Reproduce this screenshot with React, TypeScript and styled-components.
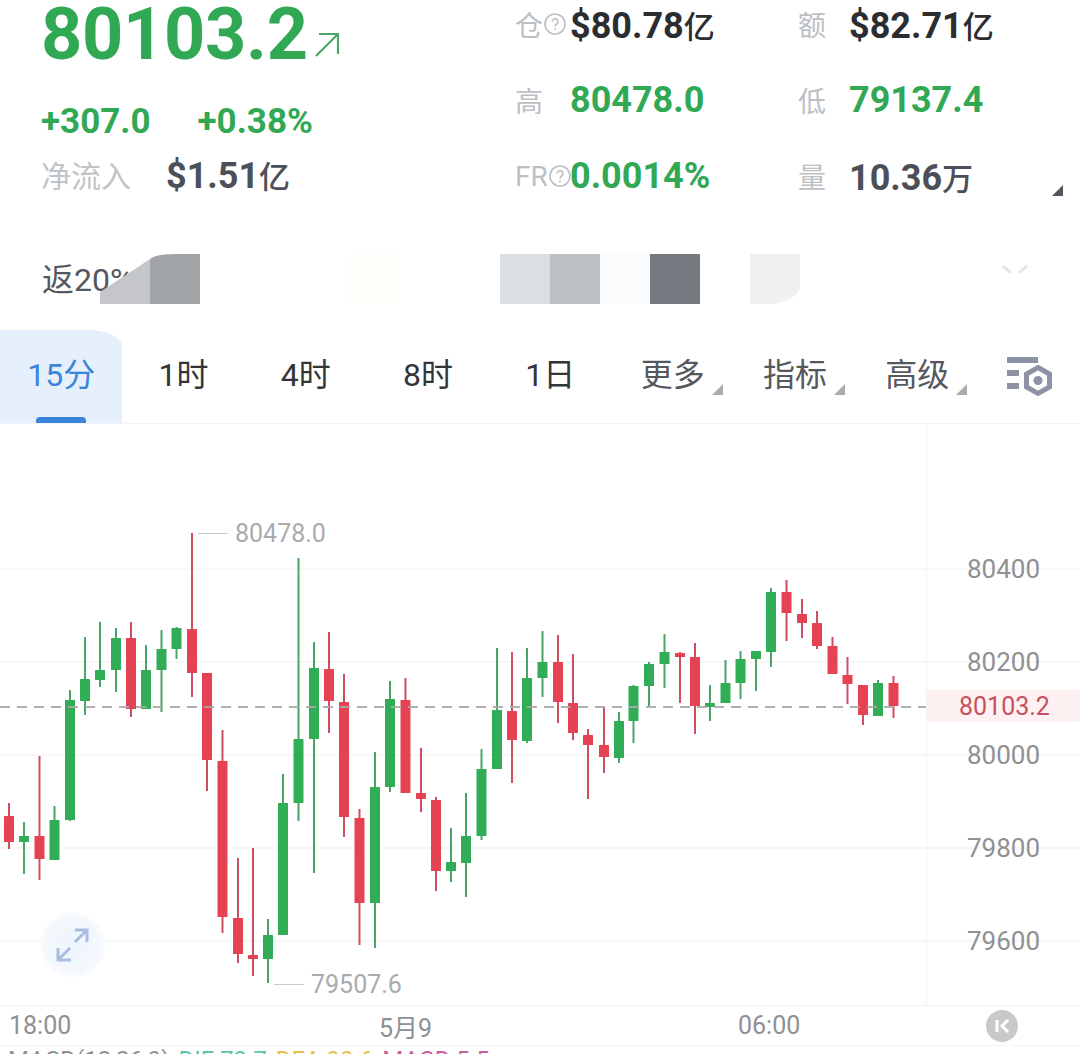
import React from "react";
import styled, { createGlobalStyle } from "styled-components";

const Global = createGlobalStyle`
  html, body { margin: 0; padding: 0; background: #fff; }
  body { font-family: Roboto, "Noto Sans CJK SC", sans-serif; }
`;

const cjk = `Roboto, "Noto Sans CJK SC", sans-serif`;
const GREEN = "#31a854";

const Page = styled.div`
  position: relative;
  width: 1080px;
  height: 1054px;
  overflow: hidden;
  background: #fff;
  font-family: ${cjk};
`;

const Header = styled.header`
  position: relative;
  display: flex;
  height: 270px;
  margin-top: -16px;
  box-sizing: border-box;
`;

const Summary = styled.section`
  width: 515px;
  padding-left: 41px;
  box-sizing: border-box;
  display: flex;
  flex-direction: column;
`;

const PriceRow = styled.div`
  display: flex;
  align-items: flex-end;
  height: 93px;
`;

const Price = styled.span`
  font-size: 72px;
  line-height: 84px;
  font-weight: 700;
  color: ${GREEN};
  letter-spacing: -0.3px;
`;

const TrendIcon = styled.svg`
  width: 25px;
  height: 25px;
  margin: 0 0 20px 6px;
  flex: none;
`;

const DeltaRow = styled.div`
  display: flex;
  gap: 47px;
  margin-top: 24px;
  height: 40px;
  align-items: center;
  font-size: 35px;
  font-weight: 700;
  color: ${GREEN};
`;

const FlowRow = styled.div`
  display: flex;
  align-items: center;
  height: 40px;
  margin-top: 13px;
`;

const FlowLabel = styled.span`
  width: 125px;
  font-size: 30px;
  color: #c0c4c8;
`;

const FlowValue = styled.span`
  font-size: 36px;
  font-weight: 700;
  color: #4c4f57;
  & > small {
    font-size: 31px;
    font-weight: 500;
  }
`;

const Stats = styled.section`
  display: grid;
  grid-template-columns: 55px 228px 51px 1fr;
  grid-auto-rows: 76px;
  align-items: center;
  margin-top: 2px;
`;

const StatLabel = styled.span`
  display: flex;
  align-items: center;
  white-space: nowrap;
  font-size: 28px;
  color: #bcc0c4;
`;

const StatValue = styled.span<{ $tone: "dark" | "green" | "slate" }>`
  font-size: 36px;
  font-weight: 700;
  white-space: nowrap;
  color: ${(p) => (p.$tone === "green" ? GREEN : p.$tone === "slate" ? "#4c4f57" : "#2b2d31")};
  & > small {
    font-size: 31px;
    font-weight: 500;
  }
`;

const HelpIcon = styled.svg`
  width: 24px;
  height: 24px;
  flex: none;
`;

const CornerMark = styled.i`
  position: absolute;
  right: 17px;
  bottom: 58px;
  width: 0;
  height: 0;
  border-left: 11px solid transparent;
  border-bottom: 11px solid #52565e;
`;

const PromoBar = styled.div`
  position: relative;
  height: 76px;
  padding-left: 42px;
  box-sizing: border-box;
  display: flex;
  align-items: flex-start;
  font-size: 32px;
  line-height: 52px;
  color: #55585e;
`;

const Mosaic = styled.div`
  position: absolute;
  left: 100px;
  top: 0;
  display: flex;
  & > span:first-child {
    clip-path: polygon(0 38px, 38px 13px, 50px 5px, 50px 50px, 0 50px);
  }
  & > span:nth-child(2) {
    border-top-left-radius: 24px 6px;
  }
  & > span:last-child {
    border-bottom-right-radius: 34px 18px;
  }
`;

const Tile = styled.span<{ $color: string }>`
  width: 50px;
  height: 50px;
  background: ${(p) => p.$color};
`;

const Chevron = styled.svg`
  position: absolute;
  left: 1000px;
  top: 10px;
  width: 30px;
  height: 14px;
`;

const Toolbar = styled.nav`
  display: flex;
  height: 93px;
  border-bottom: 1px solid #f3f4f5;
  box-sizing: content-box;
`;

const Tab = styled.div<{ $active?: boolean; $muted?: boolean }>`
  position: relative;
  width: 122.3px;
  flex: none;
  display: flex;
  align-items: center;
  justify-content: center;
  font-size: 32px;
  padding-bottom: 9px;
  box-sizing: border-box;
  color: ${(p) => (p.$active ? "#3a85d8" : p.$muted ? "#55585e" : "#333538")};
  background: ${(p) => (p.$active ? "#e6f0fc" : "transparent")};
  border-top-right-radius: ${(p) => (p.$active ? "34px 16px" : "0")};
`;

const TabBar = styled.i`
  position: absolute;
  left: 36px;
  bottom: 0;
  width: 50px;
  height: 6px;
  border-radius: 4px 4px 0 0;
  background: #3a85d8;
`;

const TabCaret = styled.i`
  position: absolute;
  right: 11px;
  bottom: 28px;
  width: 0;
  height: 0;
  border-left: 11px solid transparent;
  border-bottom: 11px solid #a9abae;
`;

const SettingsIcon = styled.svg`
  width: 48px;
  height: 42px;
  margin: 25px 0 0 27px;
  flex: none;
`;

const Chart = styled.section`
  position: relative;
  height: 582px;
  box-sizing: border-box;
  display: flex;
  justify-content: flex-end;
  border-bottom: 1px solid #f1f2f3;
`;

const ChartCanvas = styled.svg`
  position: absolute;
  left: 0;
  top: 0;
  width: 1080px;
  height: 581px;
`;

const PriceAxis = styled.div`
  position: relative;
  width: 154px;
  box-sizing: border-box;
  border-left: 1px solid #f1f2f3;
  padding-top: 98.5px;
  display: flex;
  flex-direction: column;
  align-items: flex-start;
`;

const AxisLabel = styled.span`
  height: 93px;
  flex: none;
  display: flex;
  align-items: center;
  padding-left: 40px;
  font-size: 26px;
  color: #8e9094;
`;

const LastPrice = styled.div`
  position: absolute;
  left: 0;
  right: 0;
  top: 266px;
  height: 32px;
  display: flex;
  align-items: center;
  padding-left: 32px;
  background: #fdf1f2;
  font-size: 25px;
  color: #c8505f;
`;

const Extreme = styled.div<{ $x: number; $y: number }>`
  position: absolute;
  left: ${(p) => p.$x}px;
  top: ${(p) => p.$y}px;
  display: flex;
  align-items: center;
  gap: 7px;
  height: 30px;
  font-size: 25px;
  color: #a9abae;
  &::before {
    content: "";
    width: 30px;
    height: 1px;
    background: #c9cacc;
  }
`;

const ExpandButton = styled.div`
  position: absolute;
  left: 41px;
  top: 489px;
  width: 64px;
  height: 64px;
  border-radius: 50%;
  background: radial-gradient(circle, #eff5fd 0%, #f2f7fd 50%, #fafcff 80%, #ffffff 100%);
  display: flex;
  align-items: center;
  justify-content: center;
`;

const ExpandIcon = styled.svg`
  width: 36px;
  height: 36px;
`;

const TimeAxis = styled.div`
  position: relative;
  height: 39px;
  display: grid;
  grid-template-columns: 370px 359px 248px 1fr;
  align-items: center;
  padding-left: 9px;
  font-size: 25px;
  color: #8e9094;
  border-bottom: 1px solid #f1f2f3;
`;

const JumpButton = styled.svg`
  width: 32px;
  height: 32px;
`;

const IndicatorRow = styled.div`
  display: flex;
  gap: 9px;
  padding-left: 8px;
  margin-top: 1px;
  font-size: 24px;
  line-height: 26px;
  white-space: nowrap;
`;

const Indicator = styled.span<{ $color: string }>`
  color: ${(p) => p.$color};
`;

type Candle = [number, "g" | "r", number, number, number, number];

const candles: Candle[] = [
  [9, "r", 803, 816, 842, 849],
  [24, "g", 822, 836, 842, 874],
  [39.5, "r", 756, 836, 859, 880],
  [54.5, "g", 806, 820, 860, 860],
  [70, "g", 690, 700, 820, 821],
  [85, "g", 637, 679, 701, 715],
  [100, "g", 622, 670, 680, 687],
  [116, "g", 628, 638, 670, 692],
  [131, "r", 622, 638, 709, 717],
  [146, "g", 645, 670, 709, 709],
  [161.5, "g", 630, 649, 670, 712],
  [176.5, "g", 627, 628, 649, 659],
  [192, "r", 533, 629, 673, 697],
  [207, "r", 673, 673, 760, 791],
  [222.5, "r", 730, 761, 917, 933],
  [238, "r", 858, 918, 954, 963],
  [253, "r", 848, 955, 959, 976],
  [268, "g", 919, 935, 959, 983],
  [283, "g", 774, 803, 935, 935],
  [298.5, "g", 558, 739, 803, 821],
  [314, "g", 642, 668, 739, 873],
  [329, "r", 632, 669, 701, 733],
  [344, "r", 674, 702, 817, 837],
  [359.5, "r", 809, 818, 903, 945],
  [375, "g", 752, 787, 903, 948],
  [390, "g", 681, 699, 787, 792],
  [405.5, "r", 678, 700, 793, 793],
  [421, "r", 748, 793, 799, 812],
  [436, "r", 797, 800, 871, 891],
  [451, "g", 828, 862, 871, 882],
  [466, "g", 793, 836, 863, 897],
  [481.5, "g", 749, 769, 836, 840],
  [497, "g", 648, 710, 769, 769],
  [512, "r", 652, 711, 740, 783],
  [527, "g", 648, 678, 741, 743],
  [542.5, "g", 631, 662, 678, 697],
  [558, "r", 635, 662, 702, 723],
  [573, "r", 654, 703, 733, 740],
  [588, "r", 729, 735, 745, 799],
  [604, "r", 707, 745, 757, 773],
  [619, "g", 712, 721, 758, 763],
  [633.5, "g", 685, 686, 721, 743],
  [649, "g", 662, 664, 686, 706],
  [664.5, "g", 634, 652, 664, 688],
  [680, "r", 652, 653, 657, 703],
  [695, "r", 643, 657, 706, 734],
  [710, "g", 685, 703, 707, 721],
  [725.5, "g", 660, 683, 703, 703],
  [740.5, "g", 651, 659, 683, 699],
  [756, "g", 651, 651, 659, 691],
  [771, "g", 588, 592, 652, 667],
  [786.5, "r", 580, 592, 613, 641],
  [802, "r", 599, 614, 623, 638],
  [817, "r", 611, 623, 646, 649],
  [832.5, "r", 637, 646, 674, 674],
  [847.5, "r", 657, 675, 684, 704],
  [863, "r", 685, 685, 715, 725],
  [878, "g", 680, 683, 716, 716],
  [893.5, "r", 676, 683, 706, 718],
];

const gridLines = [569, 662, 755, 848, 941];
const axisPrices = ["80400", "80200", "80000", "79800", "79600"];
const tiles = [
  "#c4c6ca", "#a2a5a8", "#ffffff", "#ffffff", "#fffffe", "#fffefa", "#ffffff", "#ffffff",
  "#dcdfe2", "#bcc1c6", "#fafcfe", "#76797f", "#ffffff", "#eff0f2",
];
const TOP = 424;

const Help = () => (
  <HelpIcon viewBox="0 0 24 24" fill="none">
    <circle cx="12" cy="12" r="10" stroke="#bcc0c4" strokeWidth="1.6" />
    <path d="M9.2 9.6a2.9 2.9 0 1 1 4.5 2.4c-1 .7-1.7 1.2-1.7 2.4" stroke="#bcc0c4" strokeWidth="1.6" />
    <circle cx="12" cy="17.2" r="1" fill="#bcc0c4" />
  </HelpIcon>
);

export default function App() {
  return (
    <Page>
      <Global />
      <Header>
        <Summary>
          <PriceRow>
            <Price>80103.2</Price>
            <TrendIcon viewBox="0 0 25 25" fill="none" stroke="#4aa668" strokeWidth="2.2">
              <path d="M2 24 23 3M5 2h19v20" />
            </TrendIcon>
          </PriceRow>
          <DeltaRow>
            <span>+307.0</span>
            <span>+0.38%</span>
          </DeltaRow>
          <FlowRow>
            <FlowLabel>净流入</FlowLabel>
            <FlowValue>$1.51<small>亿</small></FlowValue>
          </FlowRow>
        </Summary>
        <Stats>
          <StatLabel>仓<Help /></StatLabel>
          <StatValue $tone="dark">$80.78<small>亿</small></StatValue>
          <StatLabel>额</StatLabel>
          <StatValue $tone="dark">$82.71<small>亿</small></StatValue>
          <StatLabel>高</StatLabel>
          <StatValue $tone="green">80478.0</StatValue>
          <StatLabel>低</StatLabel>
          <StatValue $tone="green">79137.4</StatValue>
          <StatLabel>FR<Help /></StatLabel>
          <StatValue $tone="green">0.0014%</StatValue>
          <StatLabel>量</StatLabel>
          <StatValue $tone="slate">10.36<small>万</small></StatValue>
        </Stats>
        <CornerMark />
      </Header>
      <PromoBar>
        <span>返20%</span>
        <Mosaic>
          {tiles.map((c, i) => (
            <Tile key={i} $color={c} />
          ))}
        </Mosaic>
        <Chevron viewBox="0 0 30 14" fill="none" stroke="#e3e5e8" strokeWidth="3">
          <path d="M3 2l8 7M27 2l-8 7" />
        </Chevron>
      </PromoBar>
      <Toolbar>
        <Tab $active>15分<TabBar /></Tab>
        <Tab>1时</Tab>
        <Tab>4时</Tab>
        <Tab>8时</Tab>
        <Tab>1日</Tab>
        <Tab $muted>更多<TabCaret /></Tab>
        <Tab $muted>指标<TabCaret /></Tab>
        <Tab $muted>高级<TabCaret /></Tab>
        <SettingsIcon viewBox="0 0 48 42" fill="none">
          <path d="M2 2h31v6H2zM2 15h12v6H2zM2 28h12v6H2z" fill="#8d93a5" />
          <path d="M33 12.5 44.5 19v13L33 38.5 21.5 32V19z" stroke="#8d93a5" strokeWidth="5" />
          <circle cx="33" cy="25.5" r="4.5" fill="#8d93a5" />
        </SettingsIcon>
      </Toolbar>
      <Chart>
        <ChartCanvas viewBox={`0 ${TOP} 1080 581`}>
          {gridLines.map((y) => (
            <line key={y} x1="0" x2="1080" y1={y} y2={y} stroke="#f4f5f6" strokeWidth="1.5" />
          ))}
          {candles.map(([x, c, wt, bt, bb, wb]) => (
            <g key={x}>
              <line x1={x} x2={x} y1={wt} y2={wb} stroke={c === "g" ? "#4aa468" : "#cf4d60"} strokeWidth="2" />
              <rect
                x={x - 5}
                y={bt}
                width="10"
                height={Math.max(bb - bt, 3)}
                rx="0.5"
                fill={c === "g" ? "#31ad57" : "#e54254"}
              />
            </g>
          ))}
          <line x1="0" x2="926" y1="707" y2="707" stroke="#a9a9a9" strokeWidth="2" strokeDasharray="10 7" opacity="0.9" />
        </ChartCanvas>
        <Extreme $x={198} $y={94}>80478.0</Extreme>
        <Extreme $x={274} $y={545}>79507.6</Extreme>
        <ExpandButton>
          <ExpandIcon viewBox="0 0 36 36" fill="none" stroke="#a8bde0" strokeWidth="3">
            <path d="M20 15 32 3M20 3h12v12M15 21 3 33M3 21v12h13" />
          </ExpandIcon>
        </ExpandButton>
        <PriceAxis>
          {axisPrices.map((p) => (
            <AxisLabel key={p}>{p}</AxisLabel>
          ))}
          <LastPrice>80103.2</LastPrice>
        </PriceAxis>
      </Chart>
      <TimeAxis>
        <span>18:00</span>
        <span>5月9</span>
        <span>06:00</span>
        <JumpButton viewBox="0 0 32 32">
          <circle cx="16" cy="16" r="16" fill="#c8c9cb" />
          <path d="M11 10v12" stroke="#fff" strokeWidth="3" />
          <path d="M22 10l-6 6 6 6" fill="none" stroke="#fff" strokeWidth="3" />
        </JumpButton>
      </TimeAxis>
      <IndicatorRow>
        <Indicator $color="#8e9094">MACD(12,26,9)</Indicator>
        <Indicator $color="#5cc4a8">DIF:73.7</Indicator>
        <Indicator $color="#e5c04a">DEA:90.6</Indicator>
        <Indicator $color="#c8609a">MACD:5.5</Indicator>
      </IndicatorRow>
    </Page>
  );
}
